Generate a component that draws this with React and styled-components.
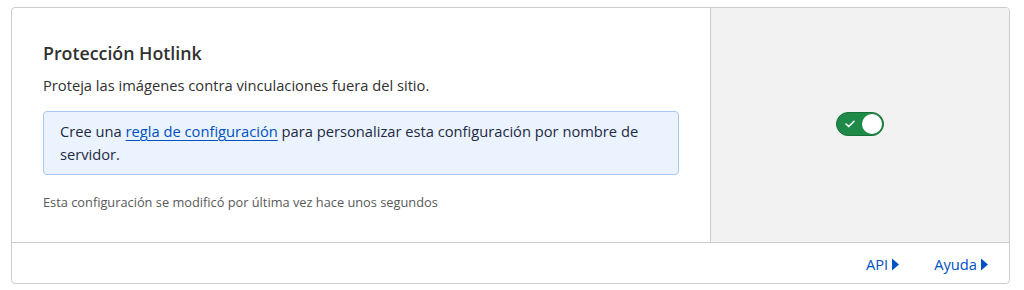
import React from "react";
import styled, { createGlobalStyle } from "styled-components";

const Global = createGlobalStyle`
  body {
    margin: 0;
    background: #ffffff;
    font-family: "Open Sans", "Noto Sans", Arial, sans-serif;
    color: #313131;
  }
`;

const Page = styled.div`
  padding: 7px 14px 0 11px;
`;

const Card = styled.div`
  border: 1px solid #cccccc;
  border-radius: 4px;
  overflow: hidden;
  display: flex;
  flex-direction: column;
`;

const Body = styled.div`
  display: flex;
  height: 234px;
  border-bottom: 1px solid #cccccc;
`;

const Main = styled.div`
  flex: 1;
  padding: 33px 31px 0 31px;
`;

const Side = styled.div`
  width: 298px;
  background: #f2f2f2;
  border-left: 1px solid #cccccc;
  display: flex;
  align-items: center;
  justify-content: center;
`;

const Title = styled.h2`
  margin: 0;
  font-size: 17.8px;
  font-weight: 600;
  line-height: 24px;
  color: #313131;
`;

const Desc = styled.p`
  margin: 9px 0 0;
  font-size: 14.7px;
  line-height: 22px;
  color: #313131;
`;

const Notice = styled.div`
  margin-top: 15px;
  padding: 8px 16px;
  background: #eaf3fe;
  border: 1px solid #a6c9f2;
  border-radius: 4px;
  font-size: 14.7px;
  line-height: 23px;
  color: #1e2a44;
`;

const Link = styled.a`
  color: #0051c3;
  text-decoration: underline;
  text-underline-offset: 3px;
  cursor: pointer;
`;

const Meta = styled.p`
  margin: 18px 0 0;
  font-size: 12.8px;
  line-height: 18px;
  color: #595959;
`;

const Switch = styled.button`
  position: relative;
  width: 48px;
  height: 24px;
  padding: 0;
  border: 1px solid #17703a;
  border-radius: 12px;
  background: #1f8a48;
  cursor: pointer;
  margin-left: -1px;
  margin-top: -2px;
`;

const Knob = styled.span`
  position: absolute;
  top: 1px;
  right: 1px;
  width: 20px;
  height: 20px;
  border-radius: 50%;
  background: #ffffff;
`;

const Check = styled.svg`
  position: absolute;
  left: 8px;
  top: 7px;
`;

const Footer = styled.div`
  height: 40px;
  display: flex;
  align-items: center;
  justify-content: flex-end;
  gap: 34px;
  padding-right: 20px;
`;

const FooterLink = styled.a`
  display: flex;
  align-items: center;
  gap: 3px;
  font-size: 14.7px;
  color: #0051c3;
  cursor: pointer;
  padding-top: 2px;
`;

const Caret = () => (
  <svg width="9" height="13" viewBox="0 0 9 13">
    <path d="M1 0.5 L8 6.5 L1 12.5 Z" fill="#0051c3" />
  </svg>
);

export default function App() {
  return (
    <Page>
      <Global />
      <Card>
        <Body>
          <Main>
            <Title>Protección Hotlink</Title>
            <Desc>Proteja las imágenes contra vinculaciones fuera del sitio.</Desc>
            <Notice>
              Cree una <Link>regla de configuración</Link> para personalizar
              esta configuración por nombre de servidor.
            </Notice>
            <Meta>Esta configuración se modificó por última vez hace unos segundos</Meta>
          </Main>
          <Side>
            <Switch aria-checked="true" role="switch">
              <Check width="10" height="8" viewBox="0 0 10 8">
                <path
                  d="M1 4 L3.8 6.6 L9 1.2"
                  fill="none"
                  stroke="#ffffff"
                  strokeWidth="1.5"
                  strokeLinecap="round"
                  strokeLinejoin="round"
                />
              </Check>
              <Knob />
            </Switch>
          </Side>
        </Body>
        <Footer>
          <FooterLink>
            API <Caret />
          </FooterLink>
          <FooterLink>
            Ayuda <Caret />
          </FooterLink>
        </Footer>
      </Card>
    </Page>
  );
}
